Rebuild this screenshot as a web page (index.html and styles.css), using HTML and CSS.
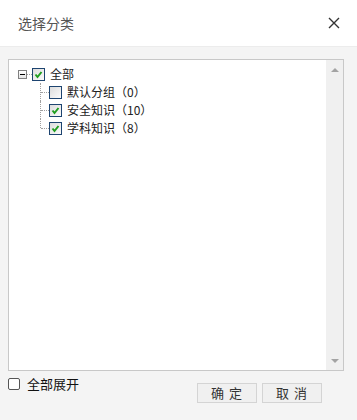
FILE: index.html
```html
<!DOCTYPE html>
<html>
	<head>
		<meta charset="UTF-8">
		<title>选择分类</title>
		<link rel="stylesheet" href="styles.css">
	</head>
	<body>
		<div class="dialog">
			<div class="head">
				<span class="title">选择分类</span>
				<span class="close">
					<svg width="12" height="12" viewBox="0 0 12 12"><path d="M1 1L11 11M11 1L1 11" stroke="#333" stroke-width="1.4" fill="none"/></svg>
				</span>
			</div>
			<div class="body">
				<div class="treebox">
					<div class="tree">
						<div class="root">
							<span class="switch"></span>
							<span class="dots"></span>
							<span class="chk on"><svg width="11" height="11" viewBox="0 0 11 11"><path d="M2.5 5.5L4.5 8L8.5 3" stroke="#1f9e1f" stroke-width="2" fill="none"/></svg></span>
							<span class="name">全部</span>
						</div>
						<ul class="kids">
							<li>
								<span class="chk"></span>
								<span class="name">默认分组（0）</span>
							</li>
							<li>
								<span class="chk on"><svg width="11" height="11" viewBox="0 0 11 11"><path d="M2.5 5.5L4.5 8L8.5 3" stroke="#1f9e1f" stroke-width="2" fill="none"/></svg></span>
								<span class="name">安全知识（10）</span>
							</li>
							<li class="last">
								<span class="chk on"><svg width="11" height="11" viewBox="0 0 11 11"><path d="M2.5 5.5L4.5 8L8.5 3" stroke="#1f9e1f" stroke-width="2" fill="none"/></svg></span>
								<span class="name">学科知识（8）</span>
							</li>
						</ul>
					</div>
					<div class="scroll">
						<span class="arrow up"></span>
						<span class="arrow down"></span>
					</div>
				</div>
				<div class="foot">
					<label class="expand">
						<span class="box"></span>
						<span>全部展开</span>
					</label>
					<div class="btns">
						<span class="btn">确&nbsp;定</span>
						<span class="btn">取&nbsp;消</span>
					</div>
				</div>
			</div>
		</div>
	</body>
</html>
```
FILE: styles.css
```css
*{
	margin: 0;
	padding: 0;
	list-style: none;
	box-sizing: border-box;
}
body{
	width: 357px;
	height: 420px;
	overflow: hidden;
	font-family: "Noto Sans CJK SC", "Noto Sans", sans-serif;
	background-color: #f4f4f4;
}
.dialog{
	height: 420px;
	display: flex;
	flex-direction: column;
}
.head{
	height: 47px;
	background-color: #fff;
	border-bottom: 1px solid #ececec;
	display: flex;
	align-items: center;
	justify-content: space-between;
	padding: 0 17px 0 18px;
}
.title{
	font-size: 14px;
	color: #555;
	line-height: 14px;
	margin-top: -1px;
}
.close{
	display: flex;
	margin-top: -1px;
}
.body{
	flex: 1;
	padding: 12px 13px 0 8px;
}
.treebox{
	height: 312px;
	background-color: #fff;
	border: 1px solid #c8c8c8;
	display: flex;
}
.tree{
	flex: 1;
	padding: 5px 0 0 9px;
	font-size: 12px;
	color: #222;
}
.root{
	height: 18px;
	display: flex;
	align-items: center;
}
.switch{
	width: 9px;
	height: 9px;
	border: 1px solid #808080;
	background: linear-gradient(#fff, #e4e4e4);
	position: relative;
}
.switch::after{
	content: "";
	position: absolute;
	left: 1px;
	top: 3px;
	width: 5px;
	height: 1px;
	background-color: #000;
}
.dots{
	width: 5px;
	border-top: 1px dotted #a0a0a0;
}
.chk{
	width: 13px;
	height: 13px;
	border: 1px solid #1d4470;
	background: linear-gradient(135deg, #dcdcdc, #fbfbfb);
	display: flex;
	align-items: center;
	justify-content: center;
	flex-shrink: 0;
}
.name{
	margin-left: 5px;
	line-height: 18px;
}
.kids{
	margin-left: 22px;
}
.kids li{
	height: 18px;
	display: flex;
	align-items: center;
	padding-left: 9px;
	position: relative;
}
.kids li::before{
	content: "";
	position: absolute;
	left: 0;
	top: 0;
	height: 18px;
	border-left: 1px dotted #a0a0a0;
}
.kids li.last::before{
	height: 9px;
}
.kids li::after{
	content: "";
	position: absolute;
	left: 1px;
	top: 9px;
	width: 8px;
	border-top: 1px dotted #a0a0a0;
}
.scroll{
	width: 17px;
	background-color: #f0f0f0;
	display: flex;
	flex-direction: column;
	justify-content: space-between;
	align-items: center;
	padding: 8px 0 7px 0;
}
.arrow{
	width: 0;
	height: 0;
	border-left: 4px solid transparent;
	border-right: 4px solid transparent;
}
.up{
	border-bottom: 4px solid #a3a3a3;
}
.down{
	border-top: 4px solid #a3a3a3;
}
.foot{
	display: flex;
	justify-content: space-between;
	padding: 6px 22px 0 0;
}
.expand{
	display: flex;
	align-items: center;
	height: 13px;
	font-size: 13px;
	color: #111;
}
.box{
	width: 12px;
	height: 12px;
	border: 1px solid #555;
	border-radius: 2px;
	background-color: #fff;
	margin-right: 7px;
}
.btns{
	display: flex;
	gap: 5px;
	margin-top: 6px;
}
.btn{
	width: 60px;
	height: 20px;
	line-height: 18px;
	text-align: center;
	font-size: 13px;
	letter-spacing: 1px;
	color: #333;
	background-color: #f0f0f0;
	border: 1px solid #d4d4d4;
}
```
